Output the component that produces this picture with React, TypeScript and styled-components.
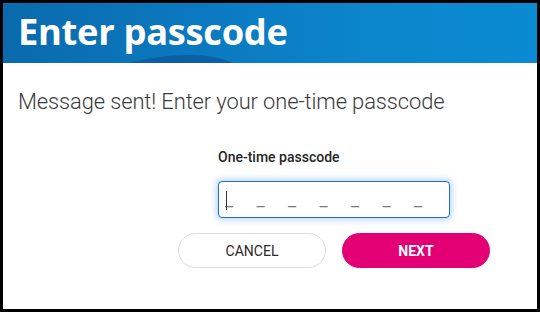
import React from 'react';
import styled, { createGlobalStyle } from 'styled-components';

const GlobalStyle = createGlobalStyle`
  html, body {
    margin: 0;
    padding: 0;
    background: #000000;
  }
  * {
    box-sizing: border-box;
  }
`;

const Frame = styled.div`
  width: 540px;
  height: 312px;
  padding: 3px;
  background: #000000;
`;

const Panel = styled.div`
  width: 100%;
  height: 100%;
  background: #ffffff;
  display: flex;
  flex-direction: column;
  overflow: hidden;
`;

const Header = styled.header`
  position: relative;
  height: 60px;
  flex-shrink: 0;
  display: flex;
  align-items: center;
  padding: 0 0 4px 15px;
  background: linear-gradient(90deg, #0a6aad 0%, #0b78bf 35%, #0b86cc 70%, #0a8ad2 100%);
  overflow: hidden;
`;

const HeaderTitle = styled.h1`
  position: relative;
  margin: 0;
  font-family: 'Open Sans', sans-serif;
  font-weight: 700;
  font-size: 36.3px;
  letter-spacing: -0.3px;
  color: #ffffff;
`;

const Hill = styled.svg`
  position: absolute;
  left: 0;
  bottom: 0;
`;

const Body = styled.main`
  flex: 1;
  display: flex;
  flex-direction: column;
  padding: 26px 15px 0 15px;
`;

const Subtitle = styled.p`
  margin: 0;
  font-family: Roboto, sans-serif;
  font-weight: 300;
  font-size: 21.9px;
  color: #3a3a3a;
  letter-spacing: -0.1px;
`;

const Form = styled.div`
  display: flex;
  flex-direction: column;
  align-items: flex-start;
  margin-left: 200px;
  margin-top: 35px;
`;

const Label = styled.label`
  font-family: Roboto, sans-serif;
  font-weight: 500;
  font-size: 14px;
  color: #262626;
`;

const CodeBox = styled.div`
  position: relative;
  margin-top: 16px;
  width: 232px;
  height: 37px;
  border: 1.5px solid #1b74c5;
  border-radius: 4px;
  background: #ffffff;
  box-shadow: 0 0 6px 2px rgba(60, 140, 220, 0.35);
  display: flex;
  align-items: flex-end;
  padding: 0 0 8px 6px;
`;

const Slot = styled.span`
  width: 31.5px;
  font-family: Roboto, sans-serif;
  font-size: 18px;
  line-height: 1;
  color: #7a7a7a;
`;

const Caret = styled.span`
  position: absolute;
  left: 7px;
  top: 9px;
  width: 1px;
  height: 19px;
  background: #333333;
`;

const Buttons = styled.div`
  display: flex;
  gap: 16px;
  margin-left: -40px;
  margin-top: 15px;
`;

const Button = styled.button<{ primary?: boolean }>`
  width: 148px;
  height: 35px;
  border-radius: 18px;
  font-family: Roboto, sans-serif;
  font-size: 14px;
  font-weight: ${p => (p.primary ? 700 : 400)};
  color: ${p => (p.primary ? '#ffffff' : '#2a2a2a')};
  background: ${p => (p.primary ? '#e20074' : '#ffffff')};
  border: 1px solid ${p => (p.primary ? '#e20074' : '#dcdcdc')};
  cursor: pointer;
`;

export default function App() {
  return (
    <>
      <GlobalStyle />
      <Frame>
        <Panel>
          <Header>
            <Hill width="534" height="12" viewBox="0 0 534 12">
              <path d="M125 12 C145 7 165 4 185 4 C205 4 218 7 230 12 Z" fill="#0c4f8f" opacity="0.6" />
            </Hill>
            <HeaderTitle>Enter passcode</HeaderTitle>
          </Header>
          <Body>
            <Subtitle>Message sent! Enter your one-time passcode</Subtitle>
            <Form>
              <Label>One-time passcode</Label>
              <CodeBox>
                <Caret />
                {Array.from({ length: 7 }).map((_, i) => (
                  <Slot key={i}>_</Slot>
                ))}
              </CodeBox>
              <Buttons>
                <Button>CANCEL</Button>
                <Button primary>NEXT</Button>
              </Buttons>
            </Form>
          </Body>
        </Panel>
      </Frame>
    </>
  );
}
